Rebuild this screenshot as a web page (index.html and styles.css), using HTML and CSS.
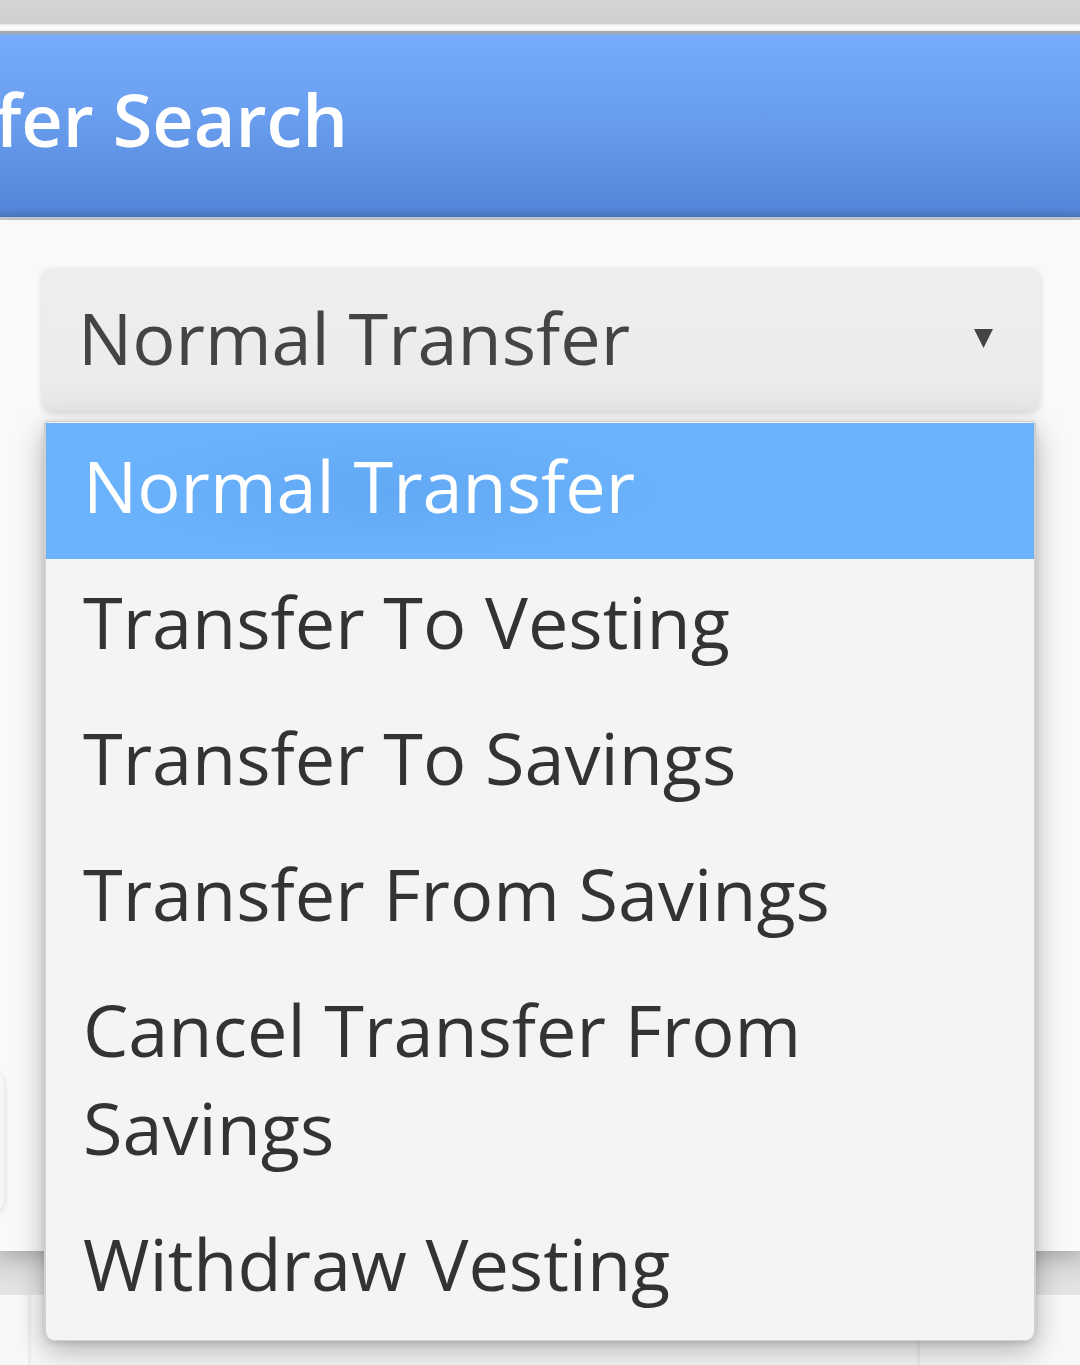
FILE: index.html
```html
<!DOCTYPE html>
<html lang="en">
<head>
<meta charset="utf-8">
<title>Transfer Search</title>
<link rel="stylesheet" href="styles.css">
</head>
<body>
<div class="screen">
  <div class="chrome-top"></div>
  <div class="chrome-gap"></div>
  <div class="chrome-edge"></div>
  <header class="appbar">
    <h1 class="title">Transfer Search</h1>
  </header>
  <main class="page">
    <div class="select">
      <span class="select-value">Normal Transfer</span>
      <svg class="select-arrow" width="19" height="20" viewBox="0 0 19 20"><polygon points="0,0 19,0 9.5,19" fill="#444"/></svg>
    </div>
    <div class="side-card"></div>
  </main>
  <footer class="below">
    <div class="below-band"></div>
    <div class="below-tiles">
      <div class="tile t1"></div>
      <div class="tile t2"></div>
      <div class="tile t3"></div>
    </div>
  </footer>

  <div class="menu">
    <div class="option selected"><span>Normal Transfer</span></div>
    <div class="option">Transfer To Vesting</div>
    <div class="option">Transfer To Savings</div>
    <div class="option">Transfer From Savings</div>
    <div class="option">Cancel Transfer From<br>Savings</div>
    <div class="option">Withdraw Vesting</div>
  </div>
</div>
</body>
</html>
```

FILE: styles.css
```css
html, body {
  margin: 0;
  padding: 0;
}
body {
  width: 1080px;
  height: 1365px;
  overflow: hidden;
  background: #f7f7f7;
  font-family: "Open Sans", "Noto Sans", sans-serif;
}
.screen {
  position: relative;
  width: 1080px;
  height: 1365px;
  overflow: hidden;
  display: flex;
  flex-direction: column;
}
.chrome-top {
  height: 24px;
  background: linear-gradient(#d5d5d5, #cecece);
}
.chrome-gap {
  height: 7px;
  background: linear-gradient(#e6e6e6, #ffffff 40%, #f2f2f2);
}
.chrome-edge {
  height: 4px;
  background: linear-gradient(#a9a9a9, #8fa8cf);
}
.appbar {
  height: 185px;
  box-sizing: border-box;
  background: linear-gradient(#77acfd, #6b9ff0 40%, #5487d9 95%, #4a78c4);
  border-bottom: 3px solid #c4c8cf;
  overflow: hidden;
}
.title {
  margin: 0 0 0 -199px;
  padding-top: 35px;
  font-size: 72px;
  line-height: 98px;
  font-weight: 600;
  color: #ffffff;
  white-space: nowrap;
}
.page {
  height: 1031px;
  box-sizing: border-box;
  padding: 48px 40px 0 42px;
  background: #f9f9f9;
  position: relative;
  z-index: 1;
  box-shadow: 0 6px 18px rgba(0, 0, 0, 0.18);
}
.select {
  height: 143px;
  box-sizing: border-box;
  padding: 0 47px 5px 36px;
  display: flex;
  align-items: center;
  justify-content: space-between;
  background: linear-gradient(#eeeeee, #ececec 80%, #e5e5e5);
  border-radius: 10px;
  box-shadow: 0 2px 6px rgba(0, 0, 0, 0.14);
}
.select-value {
  font-size: 72px;
  line-height: 98px;
  color: #444444;
}
.select-arrow {
  display: block;
  margin-top: 4px;
}
.side-card {
  margin: 660px 0 0 -80px;
  width: 42px;
  height: 140px;
  background: #f6f6f6;
  border-radius: 0 10px 10px 0;
  box-shadow: 0 2px 6px rgba(0, 0, 0, 0.14);
}
.below {
  flex: 1;
  display: flex;
  flex-direction: column;
}
.below-band {
  height: 44px;
  background: linear-gradient(#d2d2d2, #e6e6e6);
}
.below-tiles {
  flex: 1;
  display: flex;
  gap: 3px;
  background: #eeeeee;
}
.tile {
  background: #f8f8f8;
}
.t1 { width: 28px; }
.t2 { flex: 1; }
.t3 { width: 160px; }

.menu {
  position: absolute;
  left: 44px;
  top: 421px;
  width: 992px;
  box-sizing: border-box;
  z-index: 5;
  background: #f4f4f4;
  border: 1px solid #d2d2d2;
  border-left: 2px solid #cfcfcf;
  border-right: 2px solid #cfcfcf;
  border-radius: 4px 4px 10px 10px;
  padding: 1px 0 3px;
  box-shadow: 0 10px 30px rgba(0, 0, 0, 0.28), 0 2px 6px rgba(0, 0, 0, 0.12);
}
.option {
  padding: 13px 20px 25px 37px;
  font-size: 72px;
  line-height: 98px;
  color: #333333;
}
.option.selected {
  color: #ffffff;
  background:
    radial-gradient(ellipse 300px 70px at 340px 68px, rgba(80, 150, 230, 0.35), rgba(80, 150, 230, 0) 100%),
    #6cb3fd;
}
```
